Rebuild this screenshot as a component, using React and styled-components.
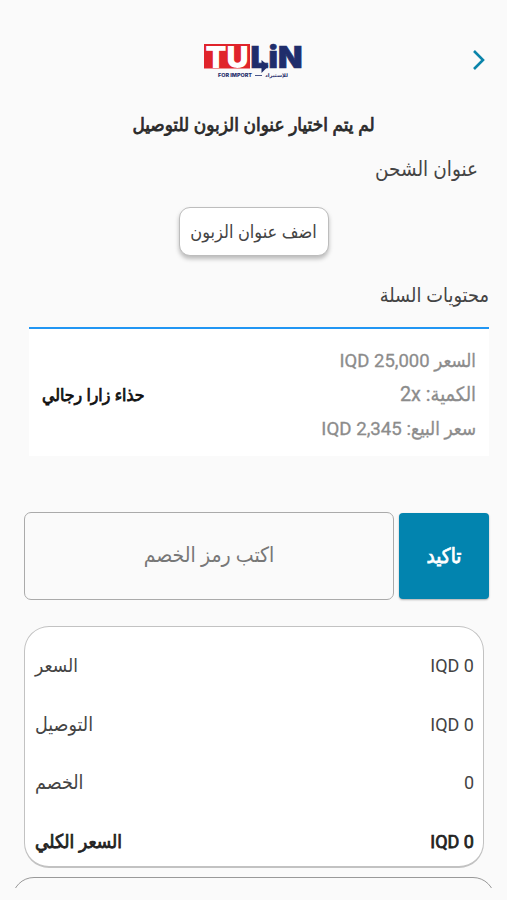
import React from "react";
import { styled, createGlobalStyle } from "styled-components";

const GlobalStyle = createGlobalStyle`
  * {
    box-sizing: border-box;
  }
  body {
    margin: 0;
    background: #fafafa;
    font-family: Roboto, "DejaVu Sans Condensed", "DejaVu Sans", sans-serif;
    color: #444;
  }
`;

const Page = styled.div`
  display: flex;
  flex-direction: column;
  height: 900px;
  overflow: hidden;
`;

const Header = styled.header`
  display: grid;
  grid-template-columns: 1fr 100px 1fr;
  align-items: center;
  height: 64px;
  margin-top: 28px;
  padding: 0 21px 0 20px;
`;

const LogoSvg = styled.svg`
  grid-column: 2;
  overflow: visible;
`;

const BackBtn = styled.button`
  display: flex;
  grid-column: 3;
  justify-self: end;
  border: none;
  padding: 0;
  background: none;
`;

const Text = styled.span`
  display: block;
  white-space: nowrap;
  font-size: ${(props) => props.$size || 18}px;
  color: ${(props) => props.$color || "#444"};
  -webkit-text-stroke: ${(props) => props.$stroke || (props.$bold ? 0.75 : 0)}px currentColor;
  line-height: 30px;
`;

const Notice = styled.div`
  display: flex;
  justify-content: center;
  margin-top: 18px;
`;

const SectionTitle = styled.div`
  display: flex;
  justify-content: flex-end;
  margin-top: ${(props) => props.$top}px;
  padding-right: ${(props) => props.$right}px;
`;

const AddressBtn = styled.button`
  display: flex;
  align-items: center;
  justify-content: center;
  align-self: center;
  width: 150px;
  height: 49px;
  margin-top: 23px;
  border: 1px solid #bdbdbd;
  border-radius: 11px;
  background: #fff;
  padding: 0;
  font-family: inherit;
  box-shadow: 0 3px 4px rgba(0, 0, 0, 0.25);
`;

const CartItem = styled.section`
  display: flex;
  align-items: center;
  justify-content: space-between;
  height: 129px;
  margin: 16px 18px 0 29px;
  padding: 4px 13px 0 13px;
  border-top: 2px solid #2196f3;
  background: #fff;
`;

const ItemInfo = styled.div`
  display: flex;
  flex-direction: column;
  align-items: flex-end;
  gap: 4px;
`;

const Coupon = styled.form`
  display: flex;
  flex-shrink: 0;
  align-items: center;
  gap: 5px;
  height: 88px;
  margin: 56px 18px 0 24px;
`;

const CouponInput = styled.input`
  width: 370px;
  height: 88px;
  border: 1px solid #aaa;
  border-radius: 7px;
  outline: none;
  padding: 0 0 2px;
  background: transparent;
  text-align: center;
  font-family: inherit;
  font-size: 21px;
  &::placeholder {
    color: #777;
    opacity: 1;
  }
`;

const ConfirmBtn = styled.button`
  display: flex;
  align-items: center;
  justify-content: center;
  flex: 1;
  height: 86px;
  border: none;
  border-radius: 4px;
  background: #0284af;
  padding: 0;
  font-family: inherit;
  box-shadow: 0 1px 2px rgba(0, 0, 0, 0.3);
`;

const Summary = styled.section`
  display: flex;
  flex-direction: column;
  flex-shrink: 0;
  width: 460px;
  height: 242px;
  margin: 26px 0 0 24px;
  padding: 10px 9px 0 10px;
  border: 1px solid #c2c2c2;
  border-bottom-width: 2px;
  border-radius: 25px;
  background: #fff;
`;

const SummaryRow = styled.div`
  display: flex;
  flex-shrink: 0;
  align-items: center;
  justify-content: space-between;
  height: 58.6px;
`;

const NextPanel = styled.div`
  flex-shrink: 0;
  height: 11px;
  margin: 9px 12px 0 12px;
  overflow: hidden;
`;

const NextPanelInner = styled.div`
  height: 60px;
  border: 1px solid #999;
  border-radius: 22px;
`;

const rows = [
  { label: "السعر", value: "IQD 0", size: 19 },
  { label: "التوصيل", value: "IQD 0", size: 19.5 },
  { label: "الخصم", value: "0", size: 19.5 },
  { label: "السعر الكلي", value: "IQD 0", size: 19, bold: true },
];

const infos = [
  { text: "السعر IQD 25,000", size: 18.5 },
  { text: "الكمية: 2x", size: 19.8 },
  { text: "سعر البيع: IQD 2,345", size: 18.7 },
];

function Logo() {
  return (
    <LogoSvg width="100" height="38" viewBox="0 0 100 38">
      <rect x="1" y="3" width="46" height="24.5" fill="#e0242b" />
      <g fontFamily="Inter" fontWeight="900" fontSize="30.5">
        <text x="2.5" y="27" fill="#fff" textLength="43" lengthAdjust="spacingAndGlyphs">TU</text>
        <text x="47.5" y="27" fill="#1f2d6b" stroke="#1f2d6b" strokeWidth="0.7" textLength="52" lengthAdjust="spacingAndGlyphs">LiN</text>
      </g>
      <path d="M58.5 19l7 6-7 7z" fill="#1f2d6b" />
      <g fontFamily="Inter, DejaVu Sans" fontWeight="800" fontSize="5" fill="#1f2d6b">
        <text x="15" y="36" textLength="34" lengthAdjust="spacingAndGlyphs">FOR IMPORT</text>
        <text x="62" y="36" textLength="23" lengthAdjust="spacingAndGlyphs">للإستيراد</text>
      </g>
      <path d="M52 34.5h7" stroke="#1f2d6b" strokeWidth="0.8" />
    </LogoSvg>
  );
}

function App() {
  return (
    <>
      <GlobalStyle />
      <Page>
        <Header>
          <Logo />
          <BackBtn type="button">
            <svg width="14" height="22" viewBox="0 0 14 22" fill="none" stroke="#0a84aa" strokeWidth="2.6">
              <path d="M2 2l9 9-9 9" />
            </svg>
          </BackBtn>
        </Header>
        <Notice>
          <Text dir="rtl" $bold $color="#2a2a2a" $size={18.8}>لم يتم اختيار عنوان الزبون للتوصيل</Text>
        </Notice>
        <SectionTitle $top={14} $right={29}>
          <Text dir="rtl" $size={20.5}>عنوان الشحن</Text>
        </SectionTitle>
        <AddressBtn type="button">
          <Text dir="rtl" $size={18}>اضف عنوان الزبون</Text>
        </AddressBtn>
        <SectionTitle $top={25} $right={18}>
          <Text dir="rtl" $size={19.8}>محتويات السلة</Text>
        </SectionTitle>
        <CartItem>
          <Text dir="rtl" $bold $color="#111" $size={17.5}>حذاء زارا رجالي</Text>
          <ItemInfo>
            {infos.map((info) => (
              <Text key={info.text} dir="rtl" $color="#8c8c8c" $stroke={0.3} $size={info.size}>{info.text}</Text>
            ))}
          </ItemInfo>
        </CartItem>
        <Coupon onSubmit={(e) => e.preventDefault()}>
          <CouponInput dir="rtl" placeholder="اكتب رمز الخصم" />
          <ConfirmBtn type="submit">
            <Text dir="rtl" $bold $color="#fff" $size={20.5}>تاكيد</Text>
          </ConfirmBtn>
        </Coupon>
        <Summary>
          {rows.map((row) => (
            <SummaryRow key={row.label}>
              <Text dir="rtl" $bold={row.bold} $size={row.size} $color={row.bold ? "#222" : "#444"}>{row.label}</Text>
              <Text $bold={row.bold} $color={row.bold ? "#222" : "#444"}>{row.value}</Text>
            </SummaryRow>
          ))}
        </Summary>
        <NextPanel>
          <NextPanelInner />
        </NextPanel>
      </Page>
    </>
  );
}

export default App;
